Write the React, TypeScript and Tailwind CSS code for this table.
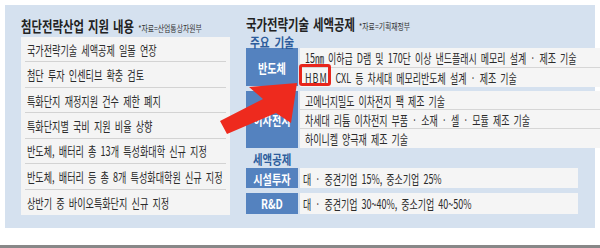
const font = "font-['Noto_Sans_CJK_KR','Noto_Sans',sans-serif]";

function Squeeze({ children, className = '' }: { children: React.ReactNode; className?: string }) {
  return <span className={`inline-block whitespace-nowrap ${className}`}>{children}</span>;
}

const leftItems = [
  '국가전략기술 세액공제 일몰 연장',
  '첨단 투자 인센티브 확충 검토',
  '특화단지 재정지원 건수 제한 폐지',
  '특화단지별 국비 지원 비율 상향',
  '반도체, 배터리 총 13개 특성화대학 신규 지정',
  '반도체, 배터리 등 총 8개 특성화대학원 신규 지정',
  '상반기 중 바이오특화단지 신규 지정',
];

function RowText({ children, wide = false }: { children: React.ReactNode; wide?: boolean }) {
  return (
    <Squeeze
      className={`origin-left text-[13px] leading-none text-[#2b2b2b] [word-spacing:3px] ${
        wide ? 'scale-x-[0.69]' : 'scale-x-[0.7]'
      }`}
    >
      {children}
    </Squeeze>
  );
}

function BlueBox({ label, className = '' }: { label: string; className?: string }) {
  return (
    <div className={`flex w-[52px] shrink-0 items-center justify-center bg-[#5482bf] ${className}`}>
      <Squeeze className="origin-center scale-x-[0.78] text-[13px] leading-none font-bold text-white">{label}</Squeeze>
    </div>
  );
}

function Title({ text, source }: { text: string; source: string }) {
  return (
    <Squeeze className="origin-left scale-x-[0.76] text-[15px] leading-none font-bold text-[#222] [word-spacing:2px]">
      {text}{' '}
      <span className="text-[9px] font-normal text-[#333] [word-spacing:0px]">{source}</span>
    </Squeeze>
  );
}

export default function App() {
  return (
    <div className={`relative flex h-[248px] w-[600px] flex-col overflow-hidden bg-white ${font}`}>
      <div className="px-[5px] pt-[5px]">
        <div className="flex h-[223px] gap-[16px] bg-[#d5e1ef] px-[16px] pt-[8px]">
          {/* left column */}
          <div className="w-[209px] shrink-0">
            <div className="flex h-[24px] items-center">
              <Title text="첨단전략산업 지원 내용" source="*자료=산업통상자원부" />
            </div>
            <div className="flex h-[178px] flex-col bg-[#f4f4f4]">
              {leftItems.map((item, i) => (
                <div key={i} className="flex flex-1 flex-col">
                  <div className="flex flex-1 items-center pl-[6px]">
                    <RowText>{item}</RowText>
                  </div>
                  {i < leftItems.length - 1 && <div className="mx-[4px] h-px bg-[#d3d3d3]" />}
                </div>
              ))}
            </div>
          </div>

          {/* right column */}
          <div className="w-[332px] shrink-0">
            <div className="flex h-[21px] items-center">
              <Title text="국가전략기술 세액공제" source="*자료=기획재정부" />
            </div>
            <div className="flex h-[14px] items-center pl-[4px]">
              <Squeeze className="origin-left scale-x-[0.82] text-[13px] leading-none font-bold text-[#2c5c9c] [word-spacing:3px]">
                주요 기술
              </Squeeze>
            </div>

            <div className="flex h-[39px] gap-[2px]">
              <BlueBox label="반도체" className="mb-px" />
              <div className="flex flex-1 flex-col bg-[#f5f5f5]">
                <div className="flex h-[20px] items-center border-b border-[#d6d6d6] pl-[5px]">
                  <RowText wide>15㎚ 이하급 D램 및 170단 이상 낸드플래시 메모리 설계 · 제조 기술</RowText>
                </div>
                <div className="relative flex flex-1 items-center pl-[5px]">
                  <RowText wide>
                    <span className="mr-[11px] tracking-[1.5px]">HBM</span>CXL 등 차세대 메모리반도체 설계 · 제조 기술
                  </RowText>
                  {/* red highlight around HBM */}
                  <span className="absolute -top-[4px] -left-[1px] h-[22px] w-[32px] rounded-[3px] border-[3px] border-[#e8251c]" />
                </div>
              </div>
            </div>

            <div className="mt-[4px] flex h-[57px] gap-[2px]">
              <BlueBox label="이차전지" />
              <div className="flex flex-1 flex-col bg-[#f5f5f5]">
                <div className="flex h-[19px] items-center border-b border-[#d6d6d6] pl-[5px]">
                  <RowText wide>고에너지밀도 이차전지 팩 제조 기술</RowText>
                </div>
                <div className="flex h-[19px] items-center border-b border-[#d6d6d6] pl-[5px]">
                  <RowText wide>차세대 리튬 이차전지 부품 · 소재 · 셀 · 모듈 제조 기술</RowText>
                </div>
                <div className="flex flex-1 items-center pl-[5px]">
                  <RowText wide>하이니켈 양극재 제조 기술</RowText>
                </div>
              </div>
            </div>

            <div className="flex h-[20px] items-end pb-[3px] pl-[7px]">
              <Squeeze className="origin-left scale-x-[0.8] text-[13px] leading-none font-bold text-[#2c5c9c]">
                세액공제
              </Squeeze>
            </div>

            <div className="flex h-[20px] gap-[2px]">
              <BlueBox label="시설투자" />
              <div className="flex flex-1 items-center bg-[#f5f5f5] pl-[3px]">
                <RowText wide>대 · 중견기업 15%, 중소기업 25%</RowText>
              </div>
            </div>
            <div className="mt-[5px] flex h-[21px] gap-[2px]">
              <BlueBox label="R&D" />
              <div className="flex flex-1 items-center bg-[#f5f5f5] pl-[3px]">
                <RowText wide>대 · 중견기업 30~40%, 중소기업 40~50%</RowText>
              </div>
            </div>
          </div>
        </div>
      </div>
      <div className="flex-1" />
      <div className="h-[3px] bg-[#888]" />

      {/* red arrow pointing at HBM */}
      <svg className="pointer-events-none absolute top-0 left-0" width="600" height="248" viewBox="0 0 600 248">
        <polygon points="297,83 249,87 263,99 220,121 227,134 276,113 291,123" fill="#ee2a1e" />
      </svg>
    </div>
  );
}
